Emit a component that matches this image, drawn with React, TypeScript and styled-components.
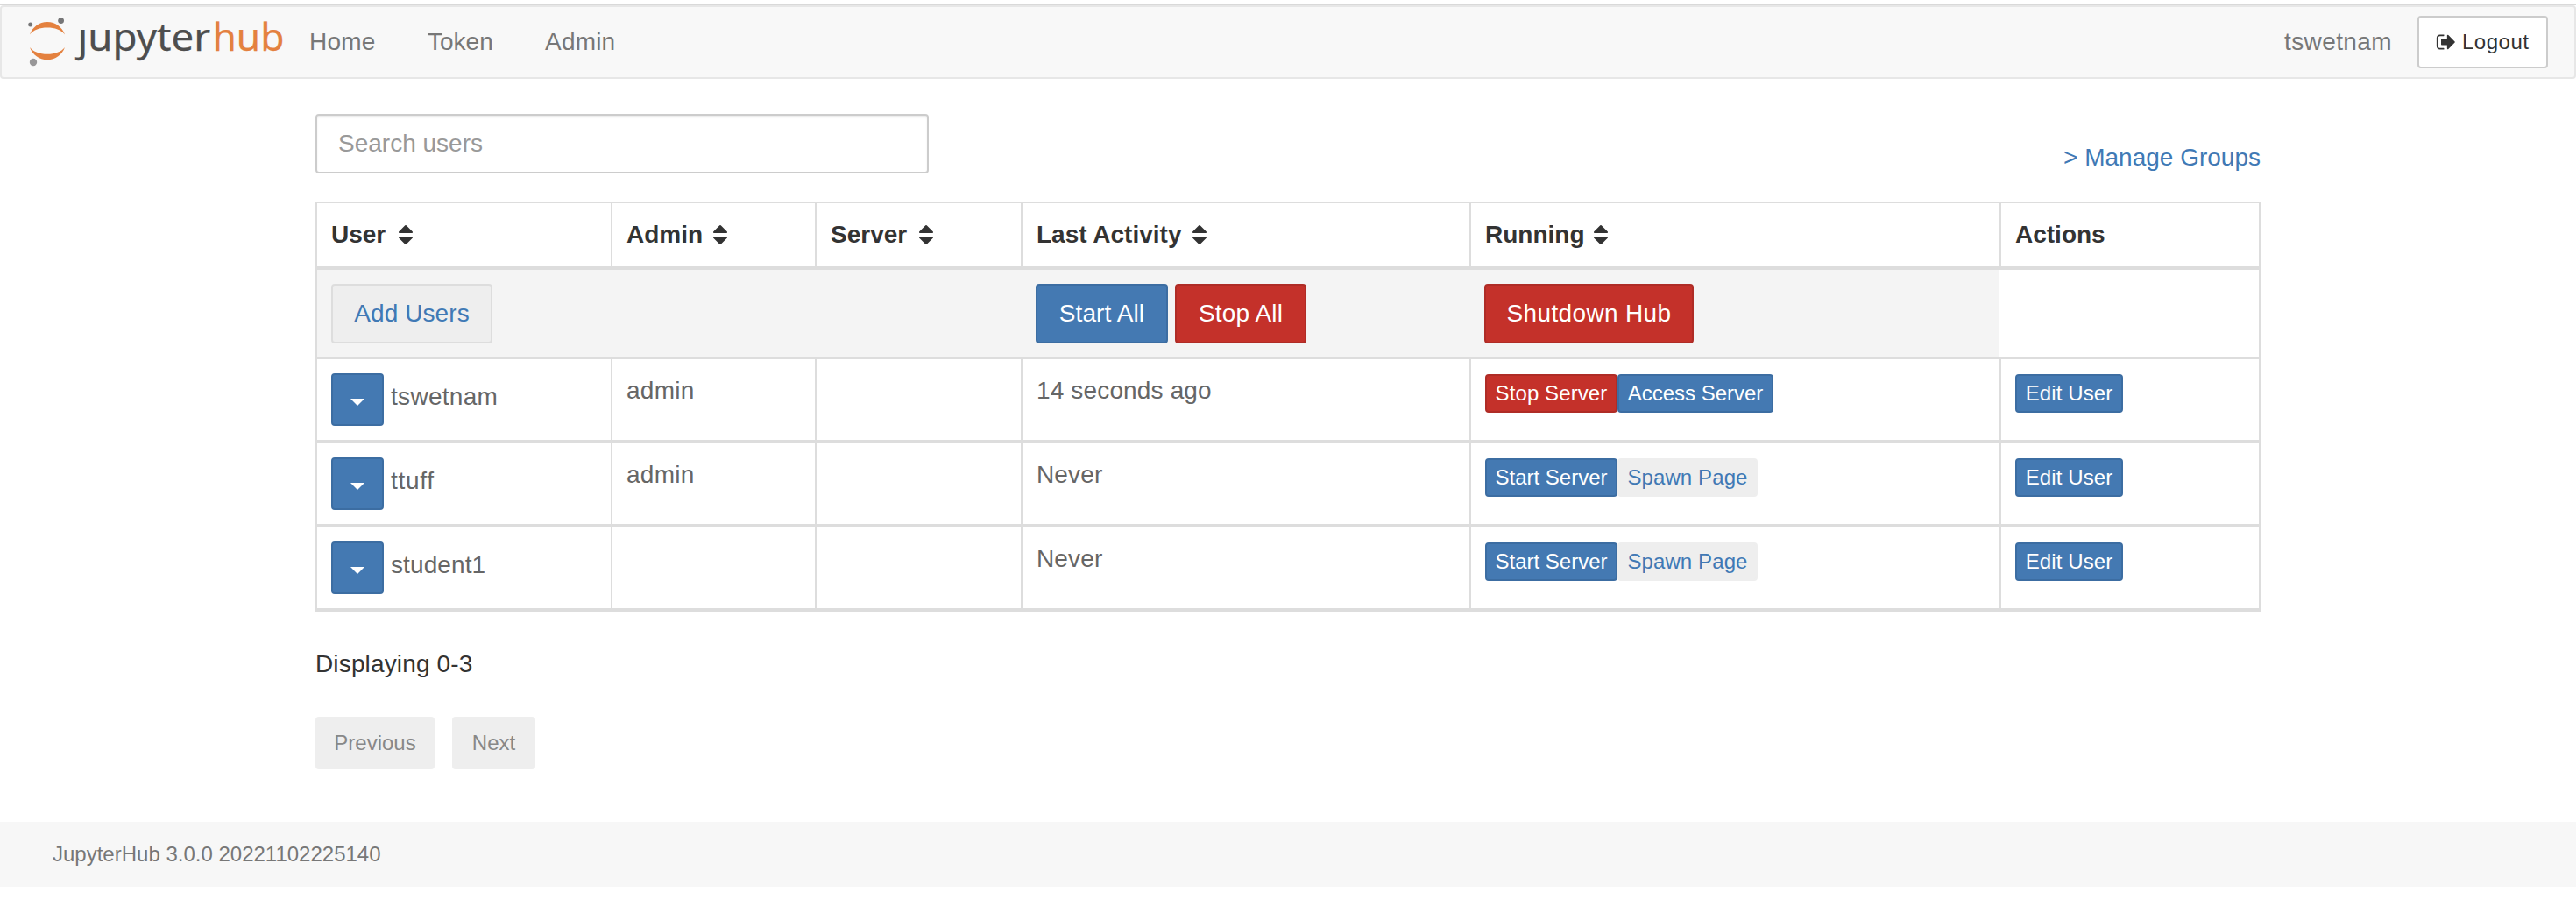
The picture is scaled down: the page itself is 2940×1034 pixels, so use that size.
import React from "react";
import styled, { createGlobalStyle } from "styled-components";

const GlobalStyle = createGlobalStyle`
  * { box-sizing: border-box; }
  body {
    margin: 0;
    background: #fff;
    color: #333;
    font-family: "Helvetica Neue", "Liberation Sans", Arial, sans-serif;
    font-size: 28px;
    line-height: 40px;
  }
  button, input { font-family: inherit; }
`;

const LINE = "#ddd";
const BLUE = "#4479b2";

const Page = styled.div`
  display: flex;
  flex-direction: column;
  height: 1034px;
  padding-top: 4px;
  overflow: hidden;
`;

const Navbar = styled.nav`
  display: flex;
  align-items: center;
  height: 86px;
  flex: none;
  border-top: 2px solid #d9d9d9;
`;

const NavInner = styled.div`
  display: flex;
  align-items: center;
  width: 100%;
  height: 84px;
  padding: 0 30px;
  border: 2px solid #e7e7e7;
  border-radius: 4px;
  background: #f8f8f8;
`;

const Logo = styled.svg`
  display: block;
  width: 320px;
  height: 80px;
  margin-left: -32px;
  flex: none;
`;

const NavLinks = styled.div`
  display: flex;
  flex: 1;
  margin-left: 33px;
`;

const NavLink = styled.a<{ $width: number; $spacing?: number }>`
  width: ${(p) => p.$width}px;
  color: #777;
  letter-spacing: ${(p) => p.$spacing ?? 0}px;
  white-space: nowrap;
`;

const LogoutButton = styled.button`
  display: flex;
  align-items: center;
  width: 149px;
  height: 60px;
  padding: 0 0 0 19px;
  border: 2px solid #ccc;
  border-radius: 4px;
  background: #fff;
  color: #333;
  font-size: 24px;
  letter-spacing: 0.5px;

  svg {
    width: 24px;
    height: 24px;
    margin-right: 6px;
    fill: #333;
  }
`;

const Container = styled.main`
  width: 2220px;
  margin: 40px auto 0;
  flex: none;
`;

const Toolbar = styled.div`
  display: flex;
  justify-content: space-between;
  align-items: flex-end;
  height: 68px;
  margin-bottom: 32px;
`;

const SearchInput = styled.input`
  width: 700px;
  height: 68px;
  padding: 0 24px;
  border: 2px solid #ccc;
  border-radius: 4px;
  font-size: 28px;
  box-shadow: inset 0 2px 2px rgba(0, 0, 0, 0.075);
  &::placeholder { color: #999; }
`;

const GroupsLink = styled.a`
  margin-bottom: -2px;
  color: #4079b5;
`;

const Table = styled.div`
  border-top: 2px solid ${LINE};
  border-right: 2px solid ${LINE};
`;

const Row = styled.div<{ $height: number; $line: number }>`
  display: grid;
  grid-template-columns: 337px 233px 235px 512px 605px 1fr;
  height: ${(p) => p.$height + p.$line}px;
  border-bottom: ${(p) => p.$line}px solid ${LINE};
`;

const Cell = styled.div<{ $spacing?: number }>`
  display: flex;
  align-items: flex-start;
  padding: 16px 0 0 16px;
  border-left: 2px solid ${LINE};
  color: #666;
  letter-spacing: ${(p) => p.$spacing ?? 0}px;
  white-space: nowrap;
`;

const HeadCell = styled(Cell)`
  align-items: center;
  padding-top: 0;
  color: #333;
  font-weight: bold;
`;

const HeadLabel = styled.span<{ $width: number }>`
  width: ${(p) => p.$width}px;
`;

const SortSvg = styled.svg`
  width: 28px;
  height: 28px;
  fill: #333;
`;

const ActionCell = styled(Cell)<{ $first?: boolean; $plain?: boolean }>`
  gap: 8px;
  padding-left: ${(p) => (p.$first ? 16 : 15)}px;
  border-left-color: ${(p) => (p.$first ? LINE : "transparent")};
  background: ${(p) => (p.$plain ? "#fff" : "#f4f4f4")};
`;

type Tone = "primary" | "danger" | "light" | "plain";

const tones: Record<Tone, { bg: string; border: string; fg: string }> = {
  primary: { bg: BLUE, border: "#3c6da2", fg: "#fff" },
  danger: { bg: "#c4312a", border: "#af2c26", fg: "#fff" },
  light: { bg: "#eee", border: LINE, fg: "#4079b5" },
  plain: { bg: "#eee", border: "#eee", fg: "#4079b5" },
};

const Button = styled.button<{ $tone: Tone; $width: number; $spacing?: number; $small?: boolean }>`
  display: flex;
  align-items: center;
  justify-content: center;
  width: ${(p) => p.$width}px;
  height: ${(p) => (p.$small ? 44 : 68)}px;
  padding: 0;
  border: 2px solid ${(p) => tones[p.$tone].border};
  border-radius: 4px;
  background: ${(p) => tones[p.$tone].bg};
  color: ${(p) => tones[p.$tone].fg};
  font-size: ${(p) => (p.$small ? 24 : 28)}px;
  letter-spacing: ${(p) => p.$spacing ?? 0}px;
  white-space: nowrap;
`;

const SmallButtons = styled.div`
  display: flex;
  margin-top: 1px;
`;

const CaretButton = styled(Button)`
  height: 60px;
  margin-right: 8px;
  padding-top: 6px;
`;

const Caret = styled.span`
  border-top: 8px solid #fff;
  border-left: 8px solid transparent;
  border-right: 8px solid transparent;
`;

const UserName = styled.span`
  line-height: 54px;
`;

const Displaying = styled.p`
  margin: 40px 0 0;
  letter-spacing: 0.15px;
`;

const Pager = styled.div`
  display: flex;
  gap: 20px;
  margin-top: 40px;
`;

const PageButton = styled.button<{ $width: number }>`
  width: ${(p) => p.$width}px;
  height: 60px;
  padding: 0;
  border: 0;
  border-radius: 4px;
  background: #eee;
  color: #888;
  font-size: 24px;
`;

const Footer = styled.footer`
  display: flex;
  align-items: center;
  flex: none;
  height: 74px;
  margin-top: 60px;
  padding-left: 60px;
  background: #f7f7f7;
  color: #777;
  font-size: 24px;
`;

const SortIcon = () => (
  <SortSvg viewBox="0 0 1792 1792">
    <path d="M1408 1088q0 26-19 45l-448 448q-19 19-45 19t-45-19l-448-448q-19-19-19-45t19-45 45-19h896q26 0 45 19t19 45zm0-384q0 26-19 45t-45 19h-896q-26 0-45-19t-19-45 19-45l448-448q19-19 45-19t45 19l448 448q19 19 19 45z" />
  </SortSvg>
);

const SignOutIcon = () => (
  <svg viewBox="0 0 1792 1792">
    <path d="M704 1440q0 4 1 20t.5 26.5-3 23.5-10 19.5-20.5 6.5h-320q-119 0-203.5-84.5t-84.5-203.5v-704q0-119 84.5-203.5t203.5-84.5h320q13 0 22.5 9.5t9.5 22.5q0 4 1 20t.5 26.5-3 23.5-10 19.5-20.5 6.5h-320q-66 0-113 47t-47 113v704q0 66 47 113t113 47h312l11.5 1 11.5 3 8 5.5 7 9 2 13.5zm928-544q0 26-19 45l-544 544q-19 19-45 19t-45-19-19-45v-288h-448q-26 0-45-19t-19-45v-384q0-26 19-45t45-19h448v-288q0-26 19-45t45-19 45 19l544 544q19 19 19 45z" />
  </svg>
);

const JupyterLogo = () => (
  <Logo viewBox="0 8 320 80" overflow="visible">
    <g fill="#e4813f">
      <path d="M34 39.4C37 31 44.8 25 54 25s17 6 20 14.400C70 34 62.500 31.400 54 31.400S38 34 34 39.400Z" />
      <path d="M34 54C37 62.400 44.800 68.300 54 68.300s17-5.900 20-14.300C70 59.200 62.500 61.800 54 61.800S38 59.200 34 54Z" />
    </g>
    <circle cx="34.700" cy="28" r="2.500" fill="#767677" />
    <circle cx="69.600" cy="23.600" r="3.400" fill="#767677" />
    <circle cx="38" cy="71" r="4.200" fill="#989798" />
    <g fontFamily="'Noto Sans', 'Open Sans', sans-serif" fontSize="44" strokeWidth="0.250">
      <text x="88.500" y="58.300" fill="#4e4e4e" stroke="#4e4e4e" textLength="151.500" lengthAdjust="spacingAndGlyphs">ȷupyter</text>
      <text x="242.500" y="58.300" fill="#e4813f" stroke="#e4813f" textLength="82" lengthAdjust="spacingAndGlyphs">hub</text>
    </g>
  </Logo>
);

const columns = [
  { label: "User", width: 71 },
  { label: "Admin", width: 93 },
  { label: "Server", width: 95 },
  { label: "Last Activity", width: 172 },
  { label: "Running", width: 118 },
];

const users = [
  { name: "tswetnam", spacing: 0.3, admin: true, activity: "14 seconds ago", running: true },
  { name: "ttuff", spacing: 0.7, admin: true, activity: "Never", running: false },
  { name: "student1", spacing: 0.1, admin: false, activity: "Never", running: false },
];

export default function App() {
  return (
    <Page>
      <GlobalStyle />
      <Navbar>
        <NavInner>
          <JupyterLogo />
          <NavLinks>
            <NavLink $width={135} $spacing={0.2}>Home</NavLink>
            <NavLink $width={134}>Token</NavLink>
            <NavLink $width={90} $spacing={0.2}>Admin</NavLink>
          </NavLinks>
          <NavLink $width={152} $spacing={0.4}>tswetnam</NavLink>
          <LogoutButton>
            <SignOutIcon />
            Logout
          </LogoutButton>
        </NavInner>
      </Navbar>

      <Container>
        <Toolbar>
          <SearchInput placeholder="Search users" />
          <GroupsLink>&gt; Manage Groups</GroupsLink>
        </Toolbar>

        <Table>
          <Row $height={72} $line={4}>
            {columns.map((c) => (
              <HeadCell key={c.label}>
                <HeadLabel $width={c.width}>{c.label}</HeadLabel>
                <SortIcon />
              </HeadCell>
            ))}
            <HeadCell>Actions</HeadCell>
          </Row>

          <Row $height={100} $line={2}>
            <ActionCell $first>
              <Button $tone="light" $width={184} $spacing={0.1}>Add Users</Button>
            </ActionCell>
            <ActionCell />
            <ActionCell />
            <ActionCell>
              <Button $tone="primary" $width={151} $spacing={0.1}>Start All</Button>
              <Button $tone="danger" $width={150} $spacing={0.15}>Stop All</Button>
            </ActionCell>
            <ActionCell>
              <Button $tone="danger" $width={239} $spacing={0.35}>Shutdown Hub</Button>
            </ActionCell>
            <ActionCell $plain />
          </Row>

          {users.map((u) => (
            <Row key={u.name} $height={92} $line={4}>
              <Cell $spacing={u.spacing}>
                <CaretButton $tone="primary" $width={60}>
                  <Caret />
                </CaretButton>
                <UserName>{u.name}</UserName>
              </Cell>
              <Cell $spacing={0.25}>{u.admin ? "admin" : ""}</Cell>
              <Cell />
              <Cell $spacing={0.15}>{u.activity}</Cell>
              <Cell>
                <SmallButtons>
                  {u.running ? (
                    <>
                      <Button $small $tone="danger" $width={151} $spacing={0.1}>Stop Server</Button>
                      <Button $small $tone="primary" $width={178}>Access Server</Button>
                    </>
                  ) : (
                    <>
                      <Button $small $tone="primary" $width={151}>Start Server</Button>
                      <Button $small $tone="plain" $width={160} $spacing={0.1}>Spawn Page</Button>
                    </>
                  )}
                </SmallButtons>
              </Cell>
              <Cell>
                <SmallButtons>
                  <Button $small $tone="primary" $width={123} $spacing={0.1}>Edit User</Button>
                </SmallButtons>
              </Cell>
            </Row>
          ))}
        </Table>

        <Displaying>Displaying 0-3</Displaying>
        <Pager>
          <PageButton $width={136}>Previous</PageButton>
          <PageButton $width={95}>Next</PageButton>
        </Pager>
      </Container>

      <Footer>JupyterHub 3.0.0 20221102225140</Footer>
    </Page>
  );
}
